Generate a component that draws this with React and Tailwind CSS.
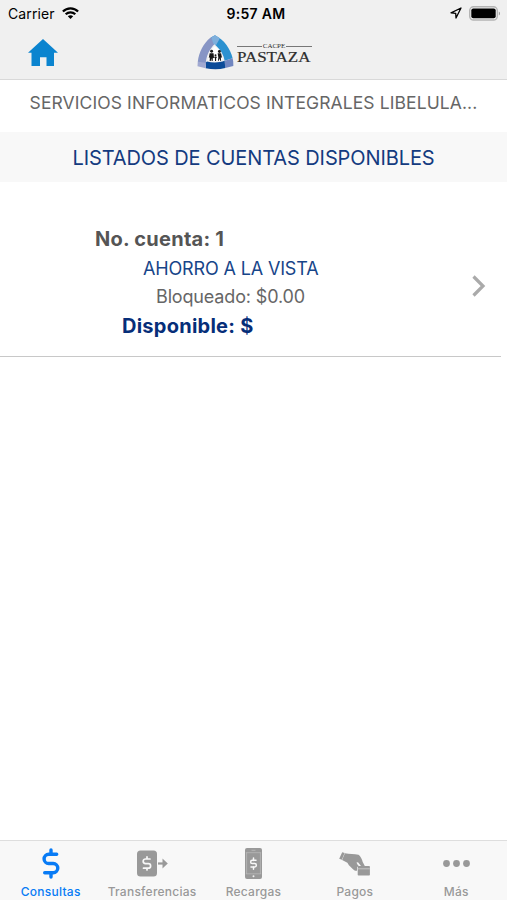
import React from 'react';

const StatusBar = () => (
    <div className="grid h-7 grid-cols-3 items-center pl-2 pr-1.5 text-black">
        <div className="flex items-center gap-[7px]">
            <span className="-mt-0.5 text-[14px] tracking-[0.1px]">Carrier</span>
            <svg className="-mt-0.5 h-3 w-[17px]" viewBox="0 0 17 12" fill="none" stroke="currentColor" strokeWidth="2.2">
                <path d="M.9 4.5C5.1.2 11.9.2 16.1 4.5" />
                <path d="M3.7 7.3c2.7-2.7 6.9-2.7 9.6 0" />
                <path d="M8.5 12 5.8 9.3c1.5-1.4 3.9-1.4 5.4 0z" fill="currentColor" stroke="none" />
            </svg>
        </div>
        <span className="-mt-0.5 whitespace-nowrap pl-[3px] text-center text-[14px] font-semibold tracking-[0.3px]">9:57 AM</span>
        <div className="-mt-0.5 flex items-center justify-end gap-[7px]">
            <svg className="h-3 w-3" viewBox="0 0 12 12" fill="none" stroke="currentColor" strokeWidth="1.3" strokeLinejoin="round">
                <path d="M11 1 1 5.8l4.7.5L6 11z" />
            </svg>
            <svg className="h-[15px] w-8" viewBox="0 0 32 15">
                <rect x=".7" y=".8" width="27.6" height="13.2" rx="3.8" fill="#f0f0f0" stroke="#b4b4b4" strokeWidth="1.4" />
                <rect x="2.3" y="2.5" width="24.4" height="9.8" rx="2" />
                <path d="M29.8 5.4c1.6.5 1.6 3.5 0 4z" fill="#999" />
            </svg>
        </div>
    </div>
);

const Logo = () => (
    <div className="flex items-center gap-[3px]">
        <svg className="h-9 w-[37px]" viewBox="0 0 38 36">
            <path d="M18 1 14 3C6.5 9 2 18 .8 28l8.2 3C9 23 12.5 15 18.5 9.5z" fill="#8795c5" />
            <path d="M18.5.8 14.6 3l4.8 8.3c5 4.4 8 9.7 9 15.8l8.2-2.6C34.5 15 28 5.5 18.5.8z" fill="#2b91d0" />
            <path d="m14.6 3 3.9-2.2 5 3.2-4.1 7.3-2.6-2z" fill="#7eafdc" />
            <path d="m28.4 27.1 8.2-2.6c.6 2.6.9 5.3.7 8l-8.3 2z" fill="#7186c0" />
            <path d="m9 28.7 1.2-.9c5.5 1.5 12.5 1.5 18.2-.7L29 34.5C22.5 36.2 15.5 36 9 34.7z" fill="#0b4b98" />
            <path d="m.8 28 8.2 1v5.7l-8.5-2z" fill="#a1a9d1" />
            <path d="M11.5 26.5c.3-6 2-11 7-14.5 4.5 3 7.3 8 7.7 14-4.5 2-9.7 2-14.7.5z" fill="#fff" />
            <g fill="#151515">
                <circle cx="15" cy="17.2" r="1.5" />
                <circle cx="23" cy="17.4" r="1.5" />
                <circle cx="19" cy="21.4" r="1" />
                <path d="M13 19.2h4l.5 5.1-1.2-.5-.2 3.5H15l-.2-3-.7 3H13l.2-4-1.1.8zM21.2 19.3h3.5l1 4.7-1.2-.5.2 3.5h-.9l-.6-2.5-.8 2.5h-.9l.4-3.5zM18.1 22.6h1.8l.5 1.6h-.7l-.1 3h-1.1l-.1-3h-.7z" />
            </g>
        </svg>
        <div className="flex w-[75px] flex-col pt-0.5 font-['Liberation_Serif',serif] text-[#2d2d2d]">
            <div className="flex h-[7px] items-center gap-px">
                <span className="h-px flex-1 bg-[#777]" />
                <span className="text-[7px] leading-[7px]">CACPE</span>
                <span className="h-px flex-1 bg-[#777]" />
            </div>
            <svg className="h-[14px] w-[75px] overflow-visible" viewBox="0 0 75 14">
                <text x="0" y="12" textLength="73.5" lengthAdjust="spacingAndGlyphs" fontSize="14.5" fill="currentColor" stroke="currentColor" strokeWidth=".2">PASTAZA</text>
            </svg>
        </div>
    </div>
);

const Dollar = () => (
    <svg className="h-[31px] w-[18px]" viewBox="0 0 18 31" fill="none" stroke="currentColor" strokeWidth="3.4" strokeLinecap="round" strokeLinejoin="round">
        <path d="M9 2v3.7M9 25v4M14.7 6.3H6.7a4.6 4.6 0 0 0 0 9.2h4.5a4.6 4.6 0 0 1 0 9.2H2.7" />
    </svg>
);

const Transfer = () => (
    <svg className="h-[27px] w-[31px]" viewBox="0 0 31 27">
        <rect y=".5" width="20" height="26" rx="3.5" fill="currentColor" />
        <path d="M10 6.8v2M10 18v2M13 9H8.5a2.3 2.3 0 0 0 0 4.6h2.8a2.3 2.3 0 0 1 0 4.6H6.5" fill="none" stroke="#f8f8f8" strokeWidth="1.7" strokeLinecap="round" />
        <path d="M21 13.5h7" stroke="currentColor" strokeWidth="2.2" />
        <path d="M25.5 8.5 30.8 13.5l-5.3 5z" fill="currentColor" />
    </svg>
);

const Phone = () => (
    <svg className="h-[31px] w-[17px]" viewBox="0 0 17 31">
        <rect width="17" height="31" rx="2" fill="currentColor" />
        <path d="M1.6 4.7v21.1M15.4 4.7v21.1M.8 4.7h15.4M.8 25.8h15.4" stroke="#c2c2c2" strokeWidth=".6" />
        <path d="M6.5 2.3h4" stroke="#bbb" strokeWidth=".8" />
        <circle cx="8.5" cy="28.3" r="1" fill="#eee" />
        <path d="M8.5 10v2.5M8.5 18.7v2.5M11 12.3H7.3a1.6 1.6 0 0 0 0 3.3h2.4a1.6 1.6 0 0 1 0 3.3H6" fill="none" stroke="#f8f8f8" strokeWidth="1.5" strokeLinecap="round" />
    </svg>
);

const Hand = () => (
    <svg className="h-6 w-[31px]" viewBox="0 0 31 24" fill="currentColor">
        <path d="M3.2.3.2 6.7l2.6 1.1L5.7 1z" />
        <path d="M5.9 1.2c4.500 1.300 9.400.3 13.600 1.600 2 1.300 3.700 4.800 4.200 7.100l2.100 4-3.200.8-3.600-4.500-1.500.2c.5 1.500 1.300 2.700 2.500 3.900l-2 .6v3.800c-1.500.4-2.700-.3-3.700-1.300l-4.400-4.200-1.500-2.500L3.100 8z" />
        <rect x="18.700" y="14" width="12.200" height="9.500" rx=".8" />
        <path d="M18.700 16.800h12.200" stroke="#c9c9c9" strokeWidth=".9" />
    </svg>
);

const More = () => (
    <svg className="h-[7px] w-[27px]" viewBox="0 0 27 7" fill="currentColor">
        <circle cx="3.5" cy="3.5" r="3.4" />
        <circle cx="13.5" cy="3.5" r="3.4" />
        <circle cx="23.5" cy="3.5" r="3.4" />
    </svg>
);

const tabs = [
    { label: 'Consultas', icon: Dollar, active: true },
    { label: 'Transferencias', icon: Transfer },
    { label: 'Recargas', icon: Phone },
    { label: 'Pagos', icon: Hand },
    { label: 'Más', icon: More },
];

export default function App() {
    return (
        <div className="flex h-[900px] w-[507px] flex-col overflow-hidden bg-white font-['Inter',sans-serif]">
            <header className="h-20 border-b border-[#d9d9d9] bg-[#f0f0f0]">
                <StatusBar />
                <div className="grid h-12 grid-cols-3 items-center">
                    <svg className="ml-7 h-[27px] w-[30px]" viewBox="0 0 30 27" fill="#0b84cf">
                        <path d="M15 0 0 13.7h3.5V27H12v-8.8h6.5V27H26V13.7h4z" />
                    </svg>
                    <div className="flex justify-center pl-px"><Logo /></div>
                </div>
            </header>

            <h2 className="flex h-[52px] items-center justify-center whitespace-nowrap pb-1.5 text-[17.5px] tracking-[0.1px] text-[#666]">
                SERVICIOS INFORMATICOS INTEGRALES LIBELULA...
            </h2>
            <h1 className="flex h-[50px] items-center justify-center whitespace-nowrap bg-[#f8f8f8] pt-0.5 text-[20px] tracking-[-0.1px] text-[#143b80]">
                LISTADOS DE CUENTAS DISPONIBLES
            </h1>

            <main className="flex-1">
                <div className="mr-1.5 flex h-[175px] items-center justify-between border-b border-[#c8c8c8] pr-[15px] pt-[34px]">
                    <div className="whitespace-nowrap pb-[7px] pl-[95px]">
                        <p className="text-[20px] font-bold leading-[29px] tracking-[0.25px] text-[#555]">No. cuenta: 1</p>
                        <p className="pl-12 text-[18px] leading-[29px] tracking-[-0.15px] text-[#174589]">AHORRO A LA VISTA</p>
                        <p className="pl-[61px] text-[18px] leading-7 tracking-[-0.15px] text-[#666]">Bloqueado: $0.00</p>
                        <p className="pl-[27px] text-[20px] font-bold leading-[30px] tracking-[0.25px] text-[#062e79]">Disponible: $</p>
                    </div>
                    <svg className="h-[22px] w-[14px]" viewBox="0 0 14 22" fill="none" stroke="#aaa" strokeWidth="3.2">
                        <path d="m1.5 1.5 9.5 9.5-9.5 9.5" />
                    </svg>
                </div>
            </main>

            <nav className="grid h-[60px] grid-cols-5 border-t border-[#dedede] bg-[#f8f8f8]">
                {tabs.map(({ label, icon: Icon, active }) => (
                    <div key={label} className={`flex flex-col items-center ${active ? 'text-[#087bf5]' : 'text-[#999]'}`}>
                        <div className="flex h-[43px] items-center pt-0.5"><Icon /></div>
                        <span className="whitespace-nowrap text-[12px] font-medium leading-4 tracking-[0.25px]">{label}</span>
                    </div>
                ))}
            </nav>
        </div>
    );
}
